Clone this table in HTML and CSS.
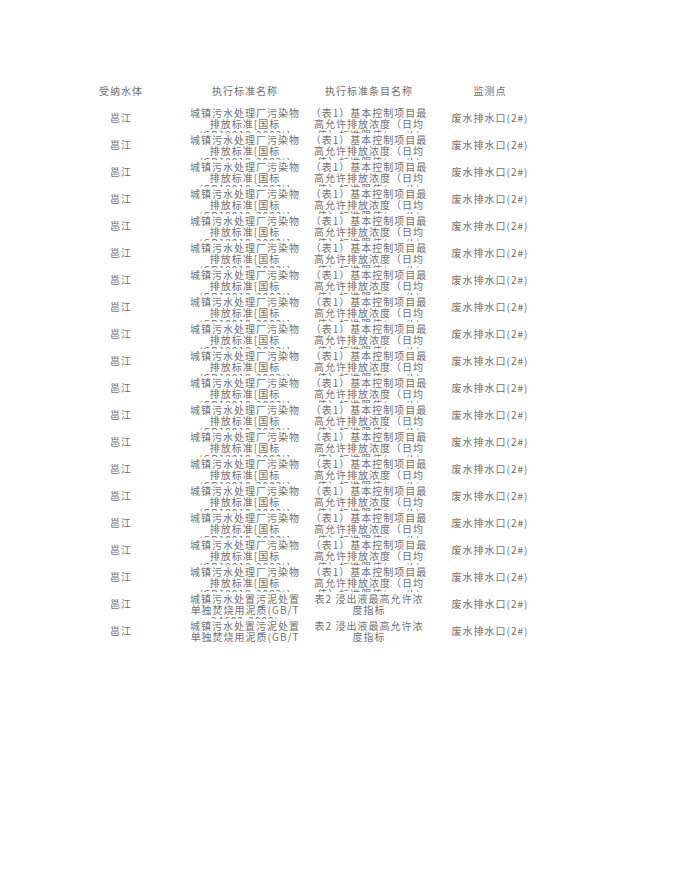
FILE: index.html
```html
<!DOCTYPE html>
<html lang="zh">
<head>
<meta charset="utf-8">
<title>监测点</title>
<link rel="stylesheet" href="styles.css">
</head>
<body>
<div class="sheet">
  <div class="row head">
    <div class="cell mid">受纳水体</div>
    <div class="cell mid">执行标准名称</div>
    <div class="cell mid">执行标准条目名称</div>
    <div class="cell mid">监测点</div>
  </div>
  <div id="rows"></div>
</div>
<script src="app.js"></script>
</body>
</html>
```

FILE: app.js
```js
var A = {
  std: ["城镇污水处理厂污染物", "排放标准[国标", "(GB18918-2002)]"],
  item: ["（表1）基本控制项目最", "高允许排放浓度（日均", "值）标准限值(mg/L)"]
};
var B = {
  std: ["城镇污水处置污泥处置", "单独焚烧用泥质(GB/T", "24602-2009)"],
  item: ["表2 浸出液最高允许浓", "度指标"]
};
var list = [];
for (var i = 0; i < 18; i++) list.push(A);
list.push(B, B);
var host = document.getElementById("rows");
function lines(arr) {
  return arr.map(function (t) { return '<span class="ln">' + t + '</span>'; }).join("");
}
host.innerHTML = list.map(function (r) {
  return '<div class="row">' +
    '<div class="cell mid">邕江</div>' +
    '<div class="cell top"><div class="clip">' + lines(r.std) + '</div></div>' +
    '<div class="cell top"><div class="clip">' + lines(r.item) + '</div></div>' +
    '<div class="cell mid">废水排水口(2#)</div>' +
  '</div>';
}).join("");
```

FILE: styles.css
```css
html, body {
  margin: 0;
  padding: 0;
  background: #ffffff;
}
body {
  font-family: "Noto Sans CJK SC", "Liberation Sans", sans-serif;
  font-size: 10px;
  color: #707070;
}
.sheet {
  padding-top: 77px;
  padding-left: 59px;
}
.row {
  display: grid;
  grid-template-columns: 124px 124px 124px 118px;
  height: 27px;
}
.cell {
  height: 27px;
  min-width: 0;
}
.mid {
  display: flex;
  align-items: center;
  justify-content: center;
  letter-spacing: 1px;
  white-space: nowrap;
}
.clip {
  height: 26px;
  padding-top: 3px;
  overflow: hidden;
  text-align: center;
}
.ln {
  display: block;
  line-height: 11px;
  height: 11px;
  letter-spacing: 1px;
  white-space: nowrap;
}
```
